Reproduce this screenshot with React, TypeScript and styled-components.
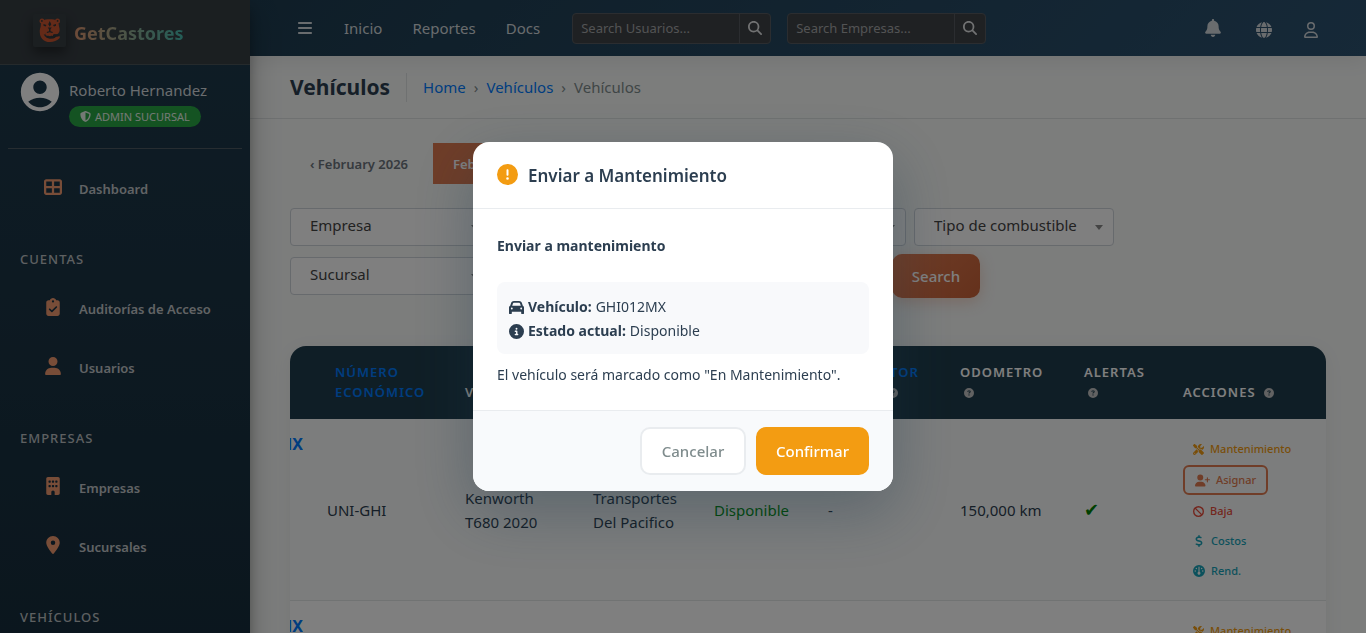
import React from "react";
import styled, { createGlobalStyle } from "styled-components";
import {
  FaBars,
  FaBan,
  FaBell,
  FaBuilding,
  FaCar,
  FaCircleExclamation,
  FaCircleInfo,
  FaCircleQuestion,
  FaClipboardCheck,
  FaDollarSign,
  FaGauge,
  FaGlobe,
  FaLocationDot,
  FaMagnifyingGlass,
  FaRegUser,
  FaScrewdriverWrench,
  FaShieldHalved,
  FaTableCellsLarge,
  FaUser,
  FaUserPlus,
} from "react-icons/fa6";
import { MdAccountCircle } from "react-icons/md";

const GlobalStyle = createGlobalStyle`
  *, *::before, *::after { box-sizing: border-box; }
  body {
    margin: 0;
    overflow: hidden;
    background: #f8faf9;
    color: #2c3e50;
    font-family: "Noto Sans", "Open Sans", sans-serif;
    font-size: 15px;
    line-height: 24px;
  }
  button, input, select { font: inherit; }
  a { text-decoration: none; }
  svg { display: block; flex-shrink: 0; }
`;

const Shell = styled.div`
  display: grid;
  grid-template-columns: 250px minmax(0, 1fr);
  height: 100vh;
  overflow: hidden;
`;

/* Sidebar */

const Sidebar = styled.aside`
  z-index: 1;
  overflow: hidden;
  background: linear-gradient(180deg, #1e3a4c 0%, #152a38 100%);
  box-shadow: 0 14px 28px rgba(0, 0, 0, 0.25), 0 10px 10px rgba(0, 0, 0, 0.22);
`;

const Brand = styled.a`
  display: flex;
  align-items: center;
  gap: 8px;
  height: 65px;
  padding: 0 33px;
  background: #373e43;
  border-bottom: 1px solid #4b5459;
`;

const LogoTile = styled.span`
  display: grid;
  place-items: center;
  width: 33px;
  height: 33px;
  margin-bottom: 4px;
  border-radius: 2px;
  box-shadow: 0 6px 12px rgba(0, 0, 0, 0.4);
`;

const BrandName = styled.span`
  padding-top: 1px;
  font-size: 18px;
  font-weight: 700;
  background: linear-gradient(90deg, #dd9670 0%, #46bcb0 100%);
  background-clip: text;
  color: transparent;
`;

const UserPanel = styled.div`
  display: flex;
  gap: 6px;
  height: 84px;
  margin: 0 8px;
  padding: 4px 9px 0;
  border-bottom: 1px solid #4f5b63;
  color: #fff;
`;

const UserText = styled.div`
  display: flex;
  flex-direction: column;
  align-items: flex-start;
  padding-top: 9px;
  gap: 4px;
`;

const UserName = styled.a`
  color: #d5dade;
`;

const RoleBadge = styled.span`
  display: flex;
  align-items: center;
  gap: 4px;
  height: 21px;
  padding: 0 11px;
  border-radius: 11px;
  background: #28a745;
  color: #e8f2ea;
  font-size: 11px;
  white-space: nowrap;
`;

const Nav = styled.nav`
  padding-top: 10px;
`;

const NavItem = styled.a`
  display: flex;
  align-items: center;
  gap: 16px;
  height: 59px;
  padding-left: 43px;
  color: #c3c7ca;
  font-size: 13px;
  font-weight: 600;
  white-space: nowrap;
`;

const NavIcon = styled.span`
  display: grid;
  flex-shrink: 0;
  place-items: center;
  width: 20px;
  padding-bottom: 3px;
  color: #f19a70;
  font-size: 18px;
`;

const NavSection = styled.h2`
  margin: 0;
  padding: 31px 20px 10px;
  color: #bcc0c3;
  font-size: 13px;
  font-weight: 500;
  line-height: 20px;
  letter-spacing: 1px;
`;

/* Main column */

const Main = styled.div`
  min-width: 0;
`;

const TopBar = styled.header`
  position: relative;
  display: flex;
  align-items: center;
  height: 56px;
  padding: 0 40px 0 32px;
  background: linear-gradient(135deg, #1e3c50 0%, #2c5270 100%);
  box-shadow: 0 4px 20px rgba(0, 0, 0, 0.08);
`;

const TopLinks = styled.nav`
  display: flex;
  gap: 30px;
  padding: 0 16px;
`;

const TopLink = styled.a`
  color: #d3d8dc;
`;

const MenuButton = styled.button`
  padding: 0;
  margin: 0 15px;
  border: 0;
  background: none;
  color: #d3d8dc;
  font-size: 16px;
`;

const SearchForm = styled.form`
  display: flex;
  width: 199px;
  height: 31px;
  margin-left: 16px;
  border: 1px solid #565b60;
  border-radius: 4px;
  background: #3f4246;
`;

const SearchInput = styled.input`
  flex: 1;
  min-width: 0;
  padding: 0 8px;
  border: 0;
  background: none;
  color: #fff;
  font-size: 13px;
  &::placeholder { color: #a5a7a9; opacity: 1; }
`;

const SearchButton = styled.button`
  display: grid;
  place-items: center;
  width: 31px;
  padding: 0;
  border: 0;
  border-left: 1px solid #565b60;
  background: none;
  color: #e3e5e6;
  font-size: 14px;
`;

const TopIcons = styled.div`
  display: flex;
  align-items: center;
  gap: 31px;
  margin-left: auto;
  padding: 4px 7px 0 0;
`;

const IconButton = styled.button`
  padding: 0;
  border: 0;
  background: none;
  color: #d3d8dc;
  font-size: 16px;
`;

const BellButton = styled(IconButton)`
  padding: 0 3px 5px 0;
  font-size: 18px;
`;

const PageHeader = styled.div`
  display: flex;
  align-items: center;
  height: 63px;
  padding: 0 40px;
  border-bottom: 1px solid #dee2e3;
`;

const PageTitle = styled.h1`
  margin: 0;
  padding-right: 16px;
  font-size: 21px;
  font-weight: 700;
  line-height: 29px;
  border-right: 1px solid #dee2e3;
`;

const Breadcrumb = styled.nav`
  display: flex;
  gap: 8px;
  padding-left: 16px;
  color: #7f8c8d;
  a { color: #007bff; }
`;

const Content = styled.main`
  padding: 24px 40px 0;
`;

const DateNav = styled.div`
  display: flex;
  gap: 2px;
  margin-bottom: 24px;
`;

const DateLink = styled.a<{ $active?: boolean }>`
  min-width: 141px;
  height: 41px;
  padding: 9px 20px;
  font-size: 13px;
  font-weight: 600;
  color: ${(p) => (p.$active ? "#fff" : "#6c757d")};
  background: ${(p) => (p.$active ? "#de7a50" : "transparent")};
`;

const Filters = styled.form`
  display: flex;
  flex-direction: column;
  gap: 8px;
`;

const FilterRow = styled.div`
  display: flex;
  align-items: center;
  gap: 8px;
`;

const SelectBox = styled.label<{ $width?: number }>`
  position: relative;
  width: ${(p) => p.$width ?? 200}px;
  height: 38px;
  &::after {
    content: "";
    position: absolute;
    right: 11px;
    top: 17px;
    border: 4px solid transparent;
    border-top: 5px solid #888;
    border-bottom: 0;
  }
`;

const Select = styled.select`
  appearance: none;
  width: 100%;
  height: 100%;
  padding: 0 19px 4px;
  border: 1px solid #ced4da;
  border-radius: 4px;
  background: #fff;
  color: #444;
`;

const SubmitButton = styled.button`
  height: 44px;
  width: 88px;
  padding: 0;
  border: 0;
  border-radius: 10px;
  background: linear-gradient(135deg, #e07b50 0%, #c96238 100%);
  box-shadow: 0 4px 15px rgba(224, 123, 80, 0.3);
  color: #fff;
  font-weight: 500;
`;

const TableCard = styled.div`
  margin-top: 48px;
  overflow: hidden;
  border-radius: 16px;
  background: #fff;
  box-shadow: 0 4px 20px rgba(0, 0, 0, 0.06);
`;

const Table = styled.table`
  width: 100%;
  table-layout: fixed;
  border-collapse: collapse;
`;

const HeadCell = styled.th<{ $indent?: boolean }>`
  height: 73px;
  padding: 15px 8px 17px ${(p) => (p.$indent ? 16 : 8)}px;
  background: #1f3d4c;
  color: #fff;
  font-size: 13px;
  font-weight: 600;
  line-height: 20px;
  letter-spacing: 1px;
  text-align: left;
  vertical-align: bottom;
  a { color: #007bff; }
  svg {
    display: inline-block;
    margin-left: 4px;
    font-size: 10px;
    color: #c4c4c4;
    vertical-align: -1px;
  }
`;

const Row = styled.tr<{ $odd?: boolean }>`
  background: ${(p) => (p.$odd ? "#f9fbfa" : "#fff")};
  border-bottom: 1px solid #e2e6e6;
`;

const Cell = styled.td`
  padding: 16px 8px 15px;
`;

const PlateCell = styled.td`
  padding: 13px 16px 0 0;
  vertical-align: top;
  font-size: 16px;
  font-weight: 700;
`;

const PlateClip = styled.div`
  display: flex;
  justify-content: flex-end;
  overflow: hidden;
  a { color: #007bff; }
`;

const Available = styled.span`
  color: #009010;
`;

const CheckMark = styled.span`
  color: #008000;
  font-family: "DejaVu Sans", sans-serif;
  font-size: 18px;
`;

const Actions = styled.div`
  display: flex;
  flex-direction: column;
  align-items: flex-start;
  gap: 2px;
`;

const ActionButton = styled.button<{ $color: string; $outlined?: boolean }>`
  display: flex;
  align-items: center;
  gap: 6px;
  height: ${(p) => (p.$outlined ? 30 : 28)}px;
  padding: 0 10px;
  border: ${(p) => (p.$outlined ? `2px solid ${p.$color}` : "0")};
  border-radius: 6px;
  background: none;
  color: ${(p) => p.$color};
  font-size: 11px;
  font-weight: 500;
`;

/* Dialog */

const Backdrop = styled.div`
  position: fixed;
  inset: 0;
  z-index: 10;
  display: grid;
  place-items: center;
  background: rgba(0, 0, 0, 0.5);
`;

const Dialog = styled.section`
  width: 420px;
  overflow: hidden;
  border-radius: 16px;
  background: #fff;
  box-shadow: 0 20px 60px rgba(30, 58, 76, 0.35);
`;

const DialogHeader = styled.header`
  display: flex;
  align-items: center;
  gap: 10px;
  height: 67px;
  padding: 1px 24px 0;
  border-bottom: 1px solid #e9ecef;
  svg { color: #f39c12; margin-bottom: 3px; }
`;

const DialogTitle = styled.h2`
  margin: 0;
  font-size: 17px;
  font-weight: 600;
`;

const DialogBody = styled.div`
  padding: 25px 24px 23px;
`;

const Lead = styled.p`
  margin: 0 0 24px;
  font-size: 14px;
  font-weight: 700;
`;

const InfoBox = styled.div`
  padding: 13px 12px 11px;
  margin-bottom: 9px;
  border-radius: 8px;
  background: #f8f9fb;
`;

const InfoLine = styled.div`
  display: flex;
  align-items: center;
  gap: 4px;
  font-size: 14px;
`;

const Note = styled.p`
  margin: 0;
  font-size: 14px;
`;

const DialogFooter = styled.footer`
  display: flex;
  justify-content: flex-end;
  gap: 10px;
  padding: 16px 24px;
  border-top: 1px solid #e9ecef;
  background: #f8fafc;
`;

const DialogButton = styled.button<{ $primary?: boolean }>`
  width: ${(p) => (p.$primary ? 113 : 106)}px;
  height: 48px;
  padding: 0;
  border: 2px solid ${(p) => (p.$primary ? "#f39c12" : "#e9ecef")};
  border-radius: 10px;
  background: ${(p) => (p.$primary ? "#f39c12" : "#fff")};
  color: ${(p) => (p.$primary ? "#fff" : "#7f8c8d")};
  font-weight: 500;
`;

const BearLogo = () => (
  <svg width="22" height="25" viewBox="0 0 22 25" aria-hidden="true">
    <g fill="#c95530">
      <circle cx="3" cy="3" r="2.500" />
      <circle cx="18.500" cy="3" r="2.500" />
      <path d="M3 3C5 1.600 8 1.200 10.750 1.200S16.500 1.600 18.500 3c1 1.500 1.300 3.500 1.500 5.500.5 1.500.8 3 .5 4.500-.3 1.500-1.300 2.700-2.500 3.200l-3 .3-1 1.500H7.500l-1-1.500-4-.3C1 15 .6 13 1 11c.2-1.200.7-2 .8-3C1.900 6 2 4.500 3 3z" />
    </g>
    <path d="M2.700 12c-.9 6.200 2.800 10.300 8.300 10.300 3.300 0 6-1.100 8-3" fill="none" stroke="#c95530" strokeWidth="3.600" strokeLinecap="round" />
    <g fill="#30363b">
      <circle cx="2.900" cy="2.900" r=".9" />
      <circle cx="18.600" cy="2.900" r=".9" />
      <path d="M10.750 3l1.500 3.200-1.500 2.600-1.500-2.600z" />
      <path d="M4.500 6l3 1-1 1.600-2-.8zM17 6l-3 1 1 1.600 2-.8z" />
      <path d="M8.700 9.500h4.100l-1.300 1.700v2.100l2.400.8-.5.900-2.700-.7-2.600.7-.5-.9 2.400-.8v-2.100z" />
      <path d="M6.500 15.200l1.200 3.200 1.500-1.200.6 2.300h1.600l.6-2.300 1.300 1.200 1.300-2.200 6 .2-1 2-2.500.4-1.500 1.200c-2 .9-6.500.7-8-.8-.7-.8-1-2.600-.8-4.100z" />
    </g>
  </svg>
);

const NavLink = ({ icon, label }: { icon: React.ReactNode; label: string }) => (
  <NavItem href="#">
    <NavIcon>{icon}</NavIcon>
    {label}
  </NavItem>
);

const FilterSelect = ({ label, width }: { label: string; width?: number }) => (
  <SelectBox $width={width}>
    <Select aria-label={label} defaultValue="">
      <option value="">{label}</option>
    </Select>
  </SelectBox>
);

const TopSearch = ({ label }: { label: string }) => (
  <SearchForm role="search" onSubmit={(e) => e.preventDefault()}>
    <SearchInput type="search" placeholder={label} aria-label={label} />
    <SearchButton type="submit" aria-label={label}>
      <FaMagnifyingGlass />
    </SearchButton>
  </SearchForm>
);

const columnWidths = [29, 138, 128, 121, 114, 132, 124, 99, 151];

type Vehicle = {
  plate: string;
  unit: string;
  model: string[];
  company: string[];
  km: string;
};

const vehicles: Vehicle[] = [
  {
    plate: "GHI012MX",
    unit: "UNI-GHI",
    model: ["Kenworth", "T680 2020"],
    company: ["Transportes", "Del Pacifico"],
    km: "150,000 km",
  },
  {
    plate: "JKL345MX",
    unit: "UNI-JKL",
    model: ["Kenworth", "T680 2021"],
    company: ["Transportes", "Del Pacifico"],
    km: "120,000 km",
  },
];

const TwoLines = ({ lines }: { lines: string[] }) => (
  <>
    {lines[0]}
    <br />
    {lines[1]}
  </>
);

const VehicleRow = ({ vehicle, odd }: { vehicle: Vehicle; odd: boolean }) => (
  <Row $odd={odd}>
    <PlateCell>
      <PlateClip>
        <a href="#">{vehicle.plate}</a>
      </PlateClip>
    </PlateCell>
    <Cell>{vehicle.unit}</Cell>
    <Cell>
      <TwoLines lines={vehicle.model} />
    </Cell>
    <Cell>
      <TwoLines lines={vehicle.company} />
    </Cell>
    <Cell>
      <Available>Disponible</Available>
    </Cell>
    <Cell>-</Cell>
    <Cell>{vehicle.km}</Cell>
    <Cell>
      <CheckMark>✔</CheckMark>
    </Cell>
    <Cell>
      <Actions>
        <ActionButton $color="#f39c12">
          <FaScrewdriverWrench size={11} />
          Mantenimiento
        </ActionButton>
        <ActionButton $color="#e07b50" $outlined>
          <FaUserPlus size={15} />
          Asignar
        </ActionButton>
        <ActionButton $color="#e74c3c">
          <FaBan size={11} />
          Baja
        </ActionButton>
        <ActionButton $color="#17a2b8">
          <FaDollarSign size={12} />
          Costos
        </ActionButton>
        <ActionButton $color="#17a2b8">
          <FaGauge size={12} />
          Rend.
        </ActionButton>
      </Actions>
    </Cell>
  </Row>
);

export default function App() {
  return (
    <>
      <GlobalStyle />
      <Shell>
        <Sidebar>
          <Brand href="#">
            <LogoTile>
              <BearLogo />
            </LogoTile>
            <BrandName>GetCastores</BrandName>
          </Brand>
          <UserPanel>
            <MdAccountCircle size={46} />
            <UserText>
              <UserName href="#">Roberto Hernandez</UserName>
              <RoleBadge>
                <FaShieldHalved />
                ADMIN SUCURSAL
              </RoleBadge>
            </UserText>
          </UserPanel>
          <Nav>
            <NavLink icon={<FaTableCellsLarge />} label="Dashboard" />
            <NavSection>CUENTAS</NavSection>
            <NavLink icon={<FaClipboardCheck />} label="Auditorías de Acceso" />
            <NavLink icon={<FaUser />} label="Usuarios" />
            <NavSection>EMPRESAS</NavSection>
            <NavLink icon={<FaBuilding />} label="Empresas" />
            <NavLink icon={<FaLocationDot />} label="Sucursales" />
            <NavSection>VEHÍCULOS</NavSection>
          </Nav>
        </Sidebar>
        <Main>
          <TopBar>
            <MenuButton aria-label="Menu">
              <FaBars />
            </MenuButton>
            <TopLinks>
              <TopLink href="#">Inicio</TopLink>
              <TopLink href="#">Reportes</TopLink>
              <TopLink href="#">Docs</TopLink>
            </TopLinks>
            <TopSearch label="Search Usuarios..." />
            <TopSearch label="Search Empresas..." />
            <TopIcons>
              <BellButton aria-label="Notificaciones">
                <FaBell />
              </BellButton>
              <IconButton aria-label="Idioma">
                <FaGlobe />
              </IconButton>
              <IconButton aria-label="Cuenta">
                <FaRegUser />
              </IconButton>
            </TopIcons>
          </TopBar>
          <PageHeader>
            <PageTitle>Vehículos</PageTitle>
            <Breadcrumb aria-label="Breadcrumb">
              <a href="#">Home</a>
              <span>›</span>
              <a href="#">Vehículos</a>
              <span>›</span>
              <span>Vehículos</span>
            </Breadcrumb>
          </PageHeader>
          <Content>
            <DateNav>
              <DateLink href="#">‹ February 2026</DateLink>
              <DateLink href="#" $active>
                February 5
              </DateLink>
            </DateNav>
            <Filters onSubmit={(e) => e.preventDefault()}>
              <FilterRow>
                <FilterSelect label="Empresa" />
                <FilterSelect label="Marca" />
                <FilterSelect label="Estado" />
                <FilterSelect label="Tipo de combustible" />
              </FilterRow>
              <FilterRow>
                <FilterSelect label="Sucursal" />
                <FilterSelect label="Conductor" />
                <FilterSelect label="Activo" width={178} />
                <SubmitButton type="submit">Search</SubmitButton>
              </FilterRow>
            </Filters>
            <TableCard>
              <Table>
                <colgroup>
                  {columnWidths.map((width, i) => (
                    <col key={i} style={{ width }} />
                  ))}
                </colgroup>
                <thead>
                  <tr>
                    <HeadCell />
                    <HeadCell $indent>
                      <a href="#">NÚMERO ECONÓMICO</a>
                    </HeadCell>
                    <HeadCell>VEHÍCULO</HeadCell>
                    <HeadCell>EMPRESA</HeadCell>
                    <HeadCell>ESTADO</HeadCell>
                    <HeadCell>
                      <a href="#">
                        CONDUCTOR
                        <br />
                        ACTUAL
                      </a>
                      <FaCircleQuestion />
                    </HeadCell>
                    <HeadCell>
                      ODOMETRO
                      <br />
                      <FaCircleQuestion />
                    </HeadCell>
                    <HeadCell>
                      ALERTAS
                      <br />
                      <FaCircleQuestion />
                    </HeadCell>
                    <HeadCell>
                      ACCIONES <FaCircleQuestion />
                    </HeadCell>
                  </tr>
                </thead>
                <tbody>
                  {vehicles.map((vehicle, i) => (
                    <VehicleRow key={vehicle.plate} vehicle={vehicle} odd={i % 2 === 0} />
                  ))}
                </tbody>
              </Table>
            </TableCard>
          </Content>
        </Main>
      </Shell>
      <Backdrop>
        <Dialog role="dialog" aria-modal="true" aria-labelledby="dialog-title">
          <DialogHeader>
            <FaCircleExclamation size={21} />
            <DialogTitle id="dialog-title">Enviar a Mantenimiento</DialogTitle>
          </DialogHeader>
          <DialogBody>
            <Lead>Enviar a mantenimiento</Lead>
            <InfoBox>
              <InfoLine>
                <FaCar size={15} />
                <strong>Vehículo:</strong> GHI012MX
              </InfoLine>
              <InfoLine>
                <FaCircleInfo size={15} />
                <strong>Estado actual:</strong> Disponible
              </InfoLine>
            </InfoBox>
            <Note>El vehículo será marcado como "En Mantenimiento".</Note>
          </DialogBody>
          <DialogFooter>
            <DialogButton type="button">Cancelar</DialogButton>
            <DialogButton type="button" $primary>
              Confirmar
            </DialogButton>
          </DialogFooter>
        </Dialog>
      </Backdrop>
    </>
  );
}
